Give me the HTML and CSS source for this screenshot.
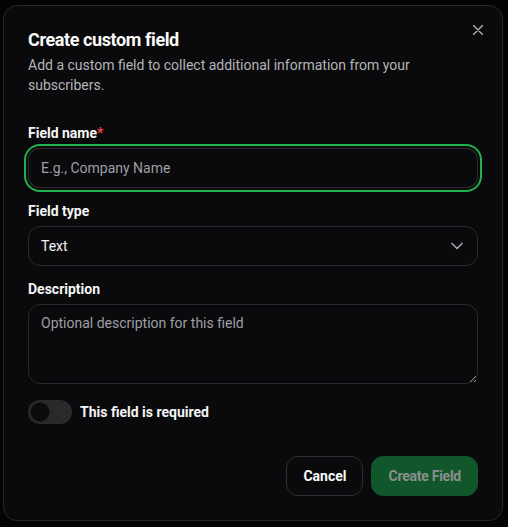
FILE: index.html
```html
<!DOCTYPE html>
<html lang="en">
<head>
<meta charset="utf-8">
<title>Create custom field</title>
<link rel="stylesheet" href="styles.css">
</head>
<body>
<div class="dialog" role="dialog">
  <button class="close" aria-label="Close">
    <svg width="10" height="10" viewBox="0 0 10 10"><path d="M0.5 0.5 9.5 9.5M9.5 0.5 0.5 9.5" stroke="#b4b4b8" stroke-width="1.4" stroke-linecap="round" fill="none"/></svg>
  </button>
  <div class="header">
    <h2 class="title">Create custom field</h2>
    <p class="subtitle">Add a custom field to collect additional information from your subscribers.</p>
  </div>
  <form class="form">
    <div class="group">
      <label class="label">Field name<span class="req">*</span></label>
      <input class="input focused" placeholder="E.g., Company Name">
    </div>
    <div class="group">
      <label class="label">Field type</label>
      <div class="input select">
        <span>Text</span>
        <svg width="20" height="20" viewBox="0 0 24 24"><path d="m6 9 6 6 6-6" stroke="#a1a1aa" stroke-width="2" fill="none" stroke-linecap="round" stroke-linejoin="round"/></svg>
      </div>
    </div>
    <div class="group">
      <label class="label">Description</label>
      <textarea class="input textarea" placeholder="Optional description for this field"></textarea>
    </div>
    <div class="switch-row">
      <span class="switch"><span class="knob"></span></span>
      <span class="switch-label">This field is required</span>
    </div>
    <div class="actions">
      <button type="button" class="btn cancel">Cancel</button>
      <button type="button" class="btn primary">Create Field</button>
    </div>
  </form>
</div>
</body>
</html>
```
FILE: styles.css
```css
* { box-sizing: border-box; }
html, body { margin: 0; padding: 0; }
body {
  background: #030303;
  font-family: "Roboto", "Noto Sans", sans-serif;
  color: #f4f4f5;
  width: 508px;
  height: 527px;
  overflow: hidden;
}
.dialog {
  position: relative;
  margin: 5px 0 0 3px;
  width: 500px;
  height: 516px;
  background: #0a0a0c;
  border: 1px solid #27272a;
  border-radius: 14px;
  padding: 22px 24px 24px;
  display: flex;
  flex-direction: column;
}
.close {
  position: absolute;
  top: 19px;
  right: 19px;
  width: 10px;
  height: 10px;
  padding: 0;
  border: 0;
  background: none;
  display: flex;
}
.title {
  margin: 0;
  font-size: 18px;
  line-height: 24px;
  font-weight: 700;
  color: #fafafa;
  letter-spacing: -0.4px;
}
.subtitle {
  margin: 3px 0 0;
  font-size: 14px;
  line-height: 20px;
  color: #b4b4b8;
}
.form {
  margin-top: 28px;
  display: flex;
  flex-direction: column;
  flex: 1;
}
.group {
  display: flex;
  flex-direction: column;
  gap: 5px;
  margin-bottom: 13px;
}
.label {
  font-size: 14px;
  line-height: 20px;
  font-weight: 700;
  color: #f4f4f5;
}
.req { color: #ef4444; }
.input {
  width: 100%;
  height: 40px;
  background: transparent;
  border: 1px solid #2a2a2e;
  border-radius: 12px;
  padding: 0 12px;
  font-family: inherit;
  font-size: 14px;
  line-height: 20px;
  color: #f4f4f5;
  outline: none;
}
.input::placeholder { color: #9f9fa5; }
.focused {
  box-shadow: 0 0 0 2px #0a0a0c, 0 0 0 4px #22b14f;
}
.select {
  display: flex;
  align-items: center;
  justify-content: space-between;
  padding-right: 10px;
}
.textarea {
  height: 80px;
  padding: 8px 12px;
  resize: vertical;
  color-scheme: dark;
  display: block;
}
.switch-row {
  margin-top: 3px;
  display: flex;
  align-items: center;
  gap: 8px;
}
.switch {
  width: 44px;
  height: 24px;
  border-radius: 12px;
  background: #2a2a2c;
  padding: 2px;
  display: flex;
}
.knob {
  width: 20px;
  height: 20px;
  border-radius: 50%;
  background: #0b0b0d;
  border: 1px solid #1c1c1e;
}
.switch-label {
  font-size: 14px;
  line-height: 20px;
  font-weight: 700;
}
.actions {
  margin-top: auto;
  display: flex;
  justify-content: flex-end;
  gap: 8px;
}
.btn {
  height: 40px;
  padding: 0 16px;
  border-radius: 12px;
  font-family: inherit;
  font-size: 14px;
  font-weight: 700;
  cursor: pointer;
}
.cancel {
  background: transparent;
  border: 1px solid #2e2e32;
  color: #fafafa;
}
.primary {
  background: #10572b;
  border: 1px solid #10572b;
  color: #8c8f8d;
  letter-spacing: -0.25px;
}
```
